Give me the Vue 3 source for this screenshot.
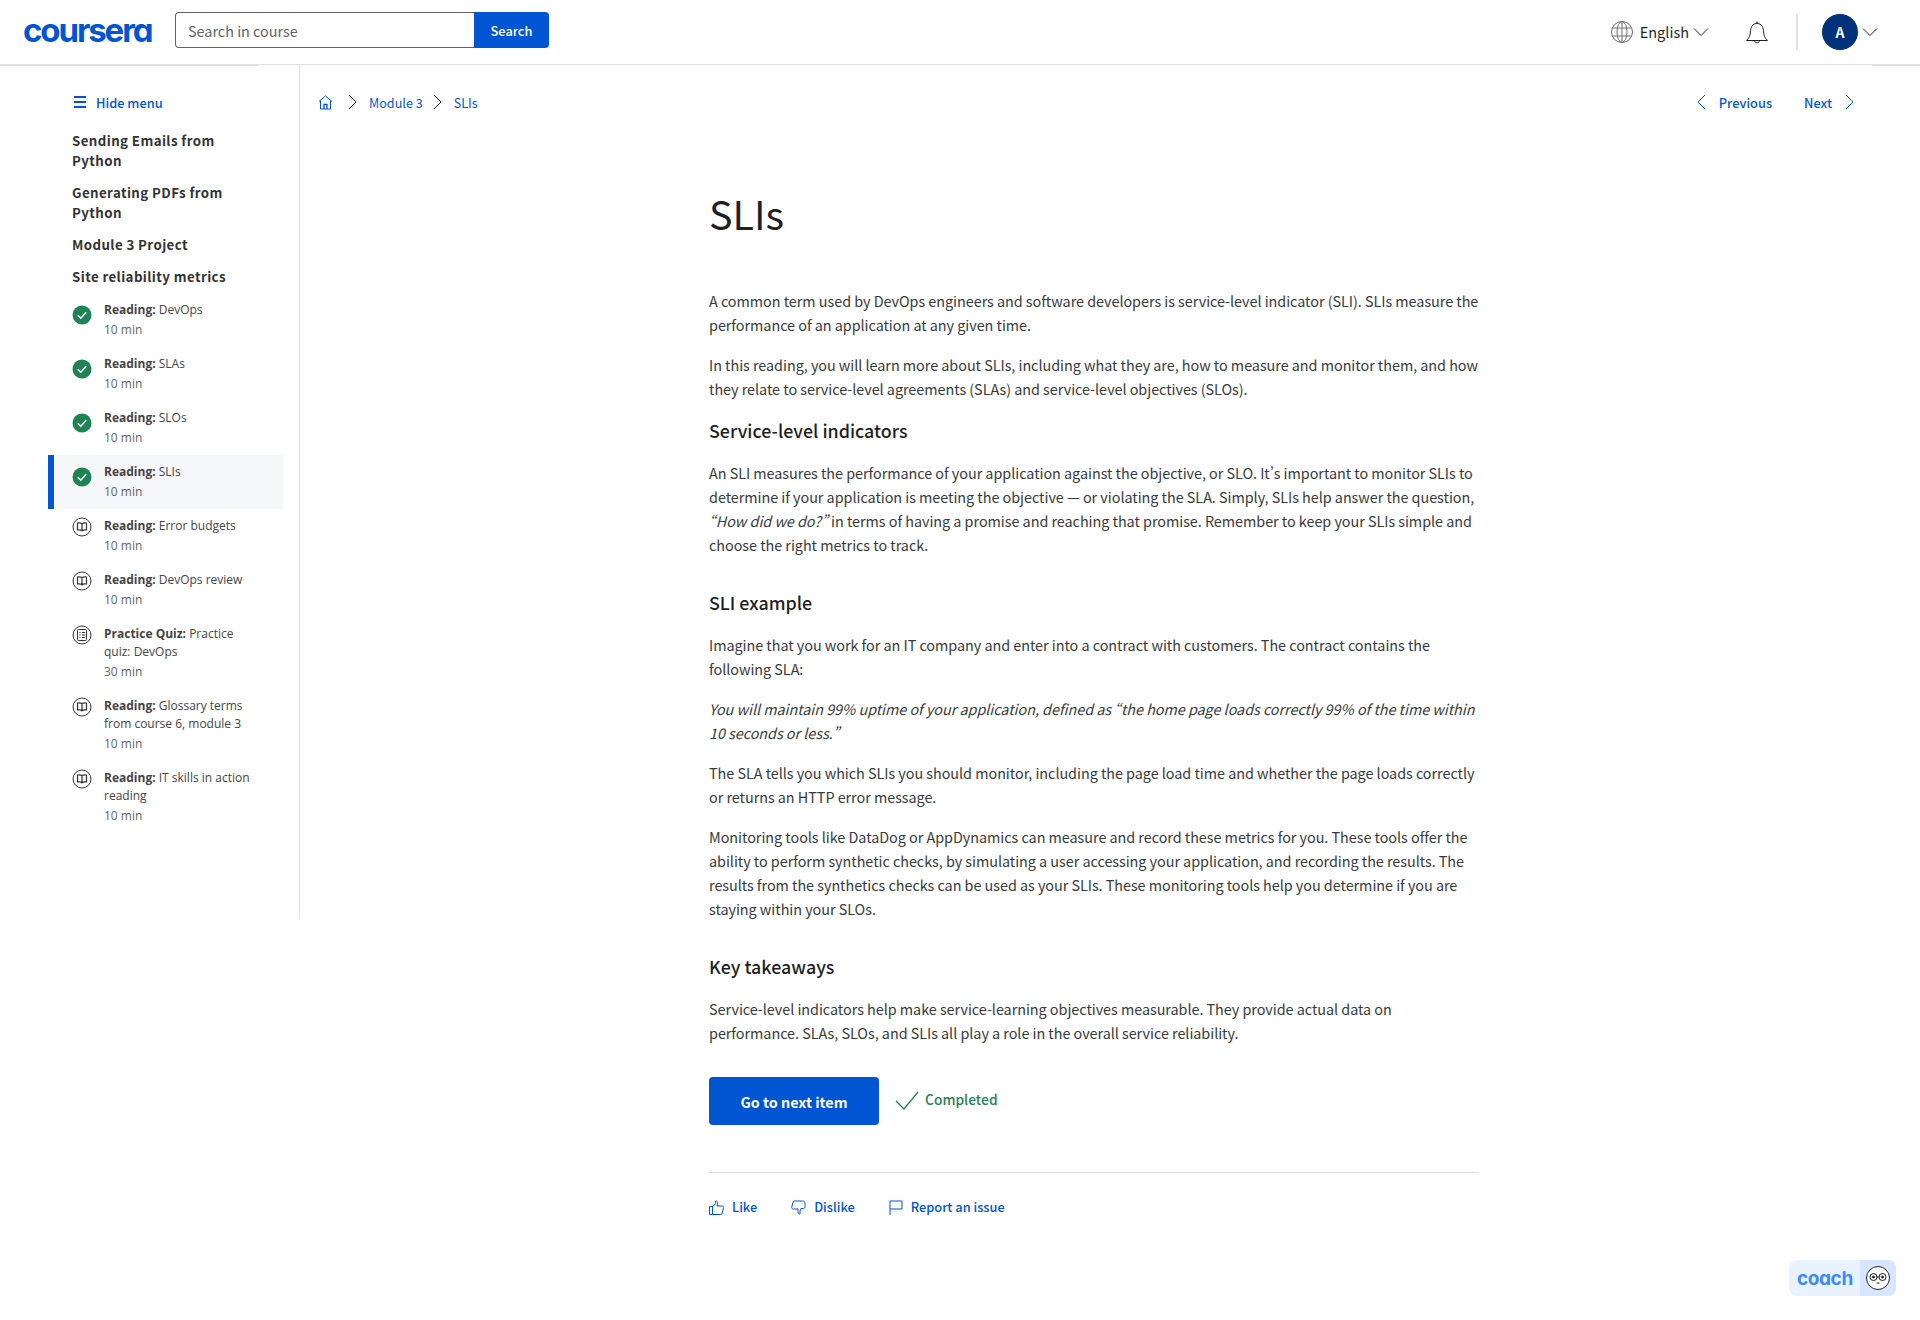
<script setup>
const sections = [
  ['Sending Emails from', 'Python'],
  ['Generating PDFs from', 'Python'],
  ['Module 3 Project'],
  ['Site reliability metrics'],
]

const items = [
  { kind: 'Reading', name: 'DevOps', time: '10 min', icon: 'done' },
  { kind: 'Reading', name: 'SLAs', time: '10 min', icon: 'done' },
  { kind: 'Reading', name: 'SLOs', time: '10 min', icon: 'done' },
  { kind: 'Reading', name: 'SLIs', time: '10 min', icon: 'done', active: true },
  { kind: 'Reading', name: 'Error budgets', time: '10 min', icon: 'book' },
  { kind: 'Reading', name: 'DevOps review', time: '10 min', icon: 'book' },
  { kind: 'Practice Quiz', name: 'Practice quiz: DevOps', time: '30 min', icon: 'quiz' },
  { kind: 'Reading', name: 'Glossary terms from course 6, module 3', time: '10 min', icon: 'book' },
  { kind: 'Reading', name: 'IT skills in action reading', time: '10 min', icon: 'book' },
]
</script>

<template>
  <div class="page">
    <header class="topbar">
      <div class="logo">coursera</div>
      <form class="search" @submit.prevent>
        <input class="search-input" type="text" placeholder="Search in course" />
        <button class="search-btn">Search</button>
      </form>
      <div class="top-right">
        <svg class="globe" width="24" height="24" viewBox="0 0 24 24" fill="none" stroke="#6f6f6f" stroke-width="1">
          <circle cx="12" cy="12" r="10.5" />
          <ellipse cx="12" cy="12" rx="5" ry="10.5" />
          <path d="M12 1.5v21M2.5 8h19M2.5 16h19" />
        </svg>
        <span class="lang">English</span>
        <svg class="chev-down" width="16" height="10" viewBox="0 0 16 10" fill="none" stroke="#1f1f1f" stroke-width="1">
          <path d="M1 1.5l7 7 7-7" />
        </svg>
        <svg class="bell" width="24" height="24" viewBox="0 0 24 24" fill="none" stroke="#1f1f1f" stroke-width="1">
          <path d="M1.5 20.5c2.500-2.500 3.600-4.500 3.900-8.500.3-4.500 1.800-8.500 6.600-8.500s6.300 4 6.600 8.500c.3 4 1.400 6 3.900 8.500z" />
          <path d="M9.500 20.500c0 3 5 3 5 0M11 3.500c0-2 2-2 2 0" />
        </svg>
        <div class="top-sep"></div>
        <div class="avatar">A</div>
        <svg class="chev-down" width="16" height="10" viewBox="0 0 16 10" fill="none" stroke="#1f1f1f" stroke-width="1">
          <path d="M1 1.5l7 7 7-7" />
        </svg>
      </div>
    </header>
    <div class="top-shade"></div>

    <div class="body">
      <aside class="sidebar">
        <div class="hide-menu">
          <svg width="12" height="12" viewBox="0 0 12 12" fill="#0056d2">
            <path d="M0 0h12v2H0zM0 5h12v2H0zM0 10h12v2H0z" />
          </svg>
          <span>Hide menu</span>
        </div>
        <div v-for="s in sections" :key="s[0]" class="section-title">
          <div v-for="line in s" :key="line">{{ line }}</div>
        </div>
        <ul class="items">
          <li v-for="item in items" :key="item.name" class="item" :class="{ active: item.active }">
            <svg v-if="item.icon === 'done'" class="item-icon done" width="20" height="20" viewBox="0 0 20 20">
              <circle cx="10" cy="10" r="9.500" fill="#1f8354" />
              <path d="M5.800 10.200l3 3 5.400-6" fill="none" stroke="#fff" stroke-width="1.500" />
            </svg>
            <svg v-else-if="item.icon === 'book'" class="item-icon" width="20" height="20" viewBox="0 0 20 20" fill="none" stroke="#333" stroke-width="1">
              <circle cx="10" cy="10" r="9" />
              <path d="M10 6.500c-1.500-.8-3-.8-4.500-.5v7c1.500-.3 3-.3 4.500.5 1.500-.8 3-.8 4.500-.5V6c-1.500-.3-3-.3-4.500.5zM10 6.500v8" stroke-width="1.200" />
            </svg>
            <svg v-else class="item-icon" width="20" height="20" viewBox="0 0 20 20" fill="none" stroke="#333" stroke-width="1">
              <circle cx="10" cy="10" r="9" />
              <rect x="5.500" y="4.500" width="9" height="11" rx="1" />
              <path d="M7.500 7.500h1M10 7.500h3M7.500 10h1M10 10h3M7.500 12.500h1M10 12.500h3" />
            </svg>
            <div class="item-text">
              <div class="item-name"><b>{{ item.kind }}:</b> {{ item.name }}</div>
              <div class="item-time">{{ item.time }}</div>
            </div>
          </li>
        </ul>
      </aside>

      <main class="main">
        <div class="crumbs">
          <nav class="breadcrumb">
            <svg class="home" width="15" height="15" viewBox="0 0 15 15" fill="none" stroke="#0056d2" stroke-width="1">
              <path d="M1 6.500L7.500 1 14 6.500M2.500 5.500v8.500h10V5.500" />
              <path d="M6 14V9.500h3V14" stroke-width="1.300" />
            </svg>
            <svg class="chev" width="9" height="16" viewBox="0 0 9 16" fill="none" stroke="#1f1f1f" stroke-width="1">
              <path d="M1 1l7 7-7 7" />
            </svg>
            <a>Module 3</a>
            <svg class="chev chev-b" width="9" height="16" viewBox="0 0 9 16" fill="none" stroke="#1f1f1f" stroke-width="1">
              <path d="M1 1l7 7-7 7" />
            </svg>
            <a>SLIs</a>
          </nav>
          <div class="prev-next">
            <svg width="9" height="16" viewBox="0 0 9 16" fill="none" stroke="#0056d2" stroke-width="1">
              <path d="M8 1L1 8l7 7" />
            </svg>
            <a class="prev">Previous</a>
            <a class="next">Next</a>
            <svg width="9" height="16" viewBox="0 0 9 16" fill="none" stroke="#0056d2" stroke-width="1">
              <path d="M1 1l7 7-7 7" />
            </svg>
          </div>
        </div>

        <article class="article">
          <h1>SLIs</h1>
          <p>A common term used by DevOps engineers and software developers is service-level indicator (SLI). SLIs measure the performance of an application at any given time.</p>
          <p>In this reading, you will learn more about SLIs, including what they are, how to measure and monitor them, and how they relate to service-level agreements (SLAs) and service-level objectives (SLOs).</p>
          <h2 class="first-h2">Service-level indicators</h2>
          <p>An SLI measures the performance of your application against the objective, or SLO. It’s important to monitor SLIs to determine if your application is meeting the objective — or violating the SLA. Simply, SLIs help answer the question, <em>“How did we do?”</em> in terms of having a promise and reaching that promise. Remember to keep your SLIs simple and choose the right metrics to track.</p>
          <h2>SLI example</h2>
          <p>Imagine that you work for an IT company and enter into a contract with customers. The contract contains the following SLA:</p>
          <p><em>You will maintain 99% uptime of your application, defined as “the home page loads correctly 99% of the time within 10 seconds or less.”</em></p>
          <p>The SLA tells you which SLIs you should monitor, including the page load time and whether the page loads correctly or returns an HTTP error message.</p>
          <p>Monitoring tools like DataDog or AppDynamics can measure and record these metrics for you. These tools offer the ability to perform synthetic checks, by simulating a user accessing your application, and recording the results. The results from the synthetics checks can be used as your SLIs. These monitoring tools help you determine if you are staying within your SLOs.</p>
          <h2>Key takeaways</h2>
          <p>Service-level indicators help make service-learning objectives measurable. They provide actual data on performance. SLAs, SLOs, and SLIs all play a role in the overall service reliability.</p>

          <div class="next-row">
            <button class="next-btn">Go to next item</button>
            <svg width="24" height="20" viewBox="0 0 24 20" fill="none" stroke="#1f8354" stroke-width="1.300">
              <path d="M1 10l8 8L23 1" />
            </svg>
            <span class="completed">Completed</span>
          </div>

          <div class="feedback">
            <a>
              <svg width="15" height="15" viewBox="0 0 15 15" fill="none" stroke="#0056d2" stroke-width="1">
                <path d="M.5 6.500h3v8h-3zM3.500 7l3-3.500V1c1.500-.5 2.500 1 2 3l-.5 2h5.500c1 0 1.500 1 1 2l-1.500 5.500c-.2.7-.7 1-1.500 1H3.500" />
              </svg>
              Like
            </a>
            <a>
              <svg width="15" height="15" viewBox="0 0 15 15" fill="none" stroke="#0056d2" stroke-width="1">
                <path d="M3 1h9c1 0 2 1 2 2v4c0 1-1 1.500-2 1.500h-2l-1 2.500v3c-1 .5-2-.5-2-2V9H2.500C1 9 .5 8 .8 7L2 2c.1-.6.500-1 1-1z" />
              </svg>
              Dislike
            </a>
            <a>
              <svg width="14" height="15" viewBox="0 0 14 15" fill="none" stroke="#0056d2" stroke-width="1">
                <path d="M1 15V1h12v8H1" />
              </svg>
              Report an issue
            </a>
          </div>
        </article>
      </main>
    </div>

    <div class="coach">
      <span class="coach-word">coach</span>
      <span class="coach-face">
        <svg width="24" height="24" viewBox="0 0 24 24" fill="#fff" stroke="#1f1f1f" stroke-width="1">
          <circle cx="12" cy="12" r="11.500" />
          <circle cx="7.500" cy="11" r="3.500" />
          <circle cx="16.500" cy="11" r="3.500" />
          <path d="M11 11h2M10.500 17h3" />
          <circle cx="7.500" cy="11" r="1" fill="#1f1f1f" />
          <circle cx="16.500" cy="11" r="1" fill="#1f1f1f" />
        </svg>
      </span>
    </div>
  </div>
</template>

<style scoped>
.page {
  position: relative;
  width: 1920px;
  height: 1320px;
  background: #fff;
  color: #1f1f1f;
  font-family: "Noto Sans CJK SC", "Noto Sans", sans-serif;
  font-variant-east-asian: proportional-width;
  overflow: hidden;
}

.topbar {
  display: flex;
  align-items: center;
  height: 65px;
  padding: 0 42px 4px 23px;
  box-sizing: border-box;
  border-bottom: 1px solid #e1e1e1;
}

.logo {
  width: 152px;
  color: #0056d2;
  font-family: Inter, sans-serif;
  font-feature-settings: "cv11";
  font-weight: 700;
  font-size: 33px;
  line-height: 30px;
  letter-spacing: -2.1px;
}

.search {
  display: flex;
  height: 36px;
}

.search-input {
  box-sizing: border-box;
  width: 299px;
  height: 36px;
  padding: 0 12px;
  border: 1px solid #636363;
  border-right: none;
  border-radius: 4px 0 0 4px;
  font-family: inherit;
  font-size: 14.400px;
  outline: none;
}

.search-input::placeholder {
  color: #636363;
  opacity: 1;
}

.search-btn {
  width: 75px;
  border: none;
  border-radius: 0 4px 4px 0;
  background: #0056d2;
  color: #fff;
  font-family: inherit;
  font-weight: 500;
  font-size: 12.800px;
}

.top-right {
  margin-left: auto;
  display: flex;
  align-items: center;
  padding-top: 4px;
}

.lang {
  margin-left: 6px;
  font-size: 14.500px;
  line-height: 24px;
}

.chev-down {
  margin-left: 4px;
}

.bell {
  margin-left: 36px;
}

.top-sep {
  width: 2px;
  height: 36px;
  margin-left: 27px;
  background: #e1e1e1;
}

.avatar {
  width: 36px;
  height: 36px;
  margin-left: 24px;
  border-radius: 50%;
  background: #00327a;
  color: #fff;
  font-weight: 700;
  font-size: 14px;
  line-height: 36px;
  text-align: center;
}

.top-shade {
  height: 1px;
  margin-bottom: -1px;
  position: relative;
  background: linear-gradient(to right, #e1e1e1 258px, transparent 258px, transparent 1872px, #e1e1e1 1872px);
}

.body {
  display: flex;
  align-items: flex-start;
}

.sidebar {
  box-sizing: border-box;
  width: 300px;
  height: 854px;
  padding: 27px 16px 0 48px;
  border-right: 1px solid #e1e1e1;
  flex-shrink: 0;
}

.hide-menu {
  display: flex;
  align-items: center;
  gap: 10px;
  height: 20px;
  margin: 0 0 19px 26px;
  color: #0056d2;
  font-weight: 500;
  font-size: 12.800px;
}

.section-title {
  margin: 12px 0 0 24px;
  color: #333;
  font-weight: 600;
  font-size: 13.300px;
  line-height: 20px;
  letter-spacing: 0.4px;
}

.section-title:first-of-type {
  margin-top: 0;
}

.items {
  list-style: none;
  margin: 6px 0 0;
  padding: 0;
  width: 235px;
}

.item {
  box-sizing: border-box;
  display: flex;
  align-items: flex-start;
  padding: 8px 24px 6px 24px;
}

.item.active {
  background: #f5f7f8;
  box-shadow: inset 6px 0 0 #0056d2;
}

.item-icon {
  flex-shrink: 0;
}

.item-icon.done {
  margin-top: 4px;
}

.item-text {
  margin-left: 12px;
  font-family: "Open Sans", sans-serif;
  font-size: 12px;
}

.item-name {
  color: #444;
  line-height: 18px;
}

.item-name b {
  font-weight: 700;
}

.item-time {
  color: #636363;
  line-height: 22px;
}

.main {
  flex: 1;
  min-width: 0;
}

.crumbs {
  display: flex;
  align-items: center;
  justify-content: space-between;
  height: 20px;
  padding: 27px 66px 0 18px;
  color: #0056d2;
  font-size: 12.600px;
}

.breadcrumb,
.prev-next {
  display: flex;
  align-items: center;
}

.breadcrumb .chev {
  margin: 0 12px 0 15px;
}

.breadcrumb .chev-b {
  margin-left: 10px;
}

.prev-next {
  font-weight: 500;
  font-size: 12.800px;
}

.prev {
  margin: 0 32px 0 13px;
}

.next {
  margin-right: 13px;
}

.article {
  width: 770px;
  margin-left: 409px;
}

h1 {
  margin: 73px 0 0;
  font-weight: 400;
  font-size: 39.500px;
  line-height: 56px;
  color: #1f1f1f;
}

p {
  margin: 0 0 16px;
  color: #373a3c;
  font-size: 14.400px;
  letter-spacing: -0.04px;
  line-height: 24px;
}

h1 + p {
  margin-top: 48px;
}

h2 {
  margin: 33px 0 19px;
  color: #1f1f1f;
  font-weight: 500;
  font-size: 17.850px;
  line-height: 24px;
}

.first-h2 {
  margin-top: 17px;
}

.next-row {
  display: flex;
  align-items: center;
  margin-top: 32px;
}

.next-btn {
  width: 170px;
  height: 48px;
  border: none;
  border-radius: 4px;
  background: #0056d2;
  color: #fff;
  font-family: inherit;
  font-weight: 700;
  font-size: 14.350px;
}

.next-row svg {
  margin: 0 6px 0 16px;
}

.completed {
  margin-bottom: 4px;
  color: #1f8354;
  font-weight: 500;
  font-size: 13.800px;
}

.feedback {
  display: flex;
  gap: 34px;
  margin-top: 47px;
  padding-top: 24px;
  border-top: 1px solid #e1e1e1;
  color: #0056d2;
  font-weight: 500;
  font-size: 12.800px;
  line-height: 20px;
}

.feedback a {
  display: flex;
  align-items: center;
  gap: 8px;
}

.coach {
  position: absolute;
  left: 1789px;
  top: 1260px;
  display: flex;
  align-items: center;
  width: 107px;
  height: 36px;
  border-radius: 8px;
  overflow: hidden;
  background: #e9f2ff;
}

.coach-word {
  flex: 1;
  padding-left: 8px;
  color: #3d8bfd;
  font-family: Inter, sans-serif;
  font-feature-settings: "cv11";
  font-weight: 700;
  font-size: 19px;
  letter-spacing: -0.4px;
}

.coach-face {
  display: flex;
  align-items: center;
  justify-content: center;
  width: 36px;
  height: 36px;
  background: #d6e6ff;
}
</style>

<style>
html, body { margin: 0; background: #fff; }
</style>
